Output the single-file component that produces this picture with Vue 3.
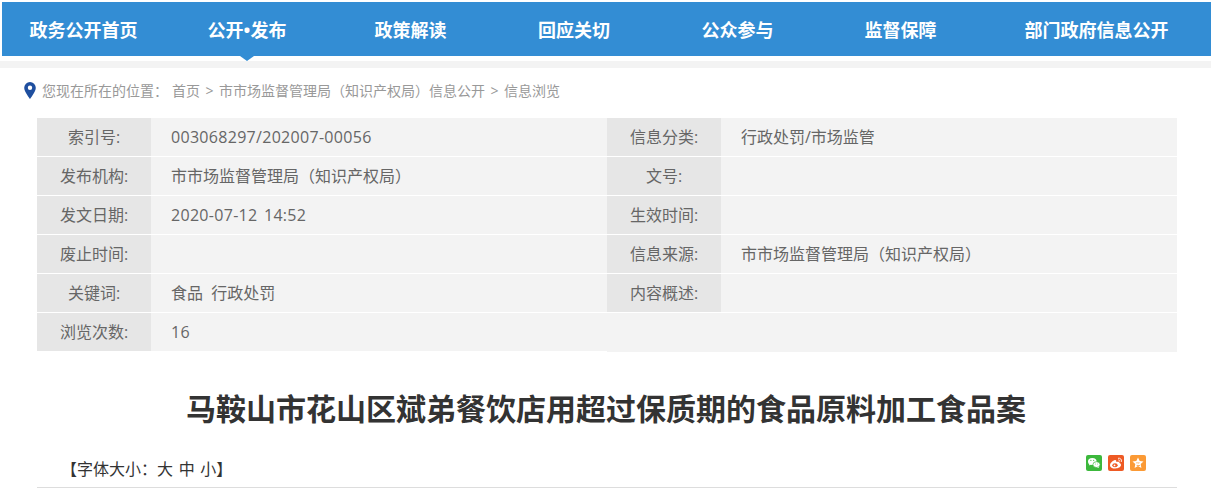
<script setup>
const navItems = ['政务公开首页', '公开•发布', '政策解读', '回应关切', '公众参与', '监督保障', '部门政府信息公开']
const rows = [
  ['索引号:', '003068297/202007-00056', '信息分类:', '行政处罚/市场监管'],
  ['发布机构:', '市市场监督管理局（知识产权局）', '文号:', ''],
  ['发文日期:', '2020-07-12 14:52', '生效时间:', ''],
  ['废止时间:', '', '信息来源:', '市市场监督管理局（知识产权局）'],
  ['关键词:', '食品  行政处罚', '内容概述:', ''],
]
const isNumeric = (text) => /^[\d/ :-]+$/.test(text)
</script>

<template>
  <div class="page">
    <nav class="nav">
      <a v-for="(item, i) in navItems" :key="item" class="nav-item" :class="{ active: i === 1 }">{{ item }}</a>
    </nav>
    <div class="band"></div>
    <div class="crumb">
      <svg class="pin" width="12" height="17" viewBox="0 0 12 17">
        <path fill="#1f4f9f" fill-rule="evenodd" d="M6 0a5.8 5.8 0 0 0-5.8 5.800C.2 9.800 6 17 6 17s5.800-7.200 5.800-11.200A5.800 5.800 0 0 0 6 0zm0 3.600a2.200 2.200 0 1 1 0 4.400 2.200 2.200 0 0 1 0-4.400z"/>
      </svg>
      <span class="crumb-lead">您现在所在的位置：</span>
      <span>首页</span><span class="sep">&gt;</span><span>市市场监督管理局（知识产权局）信息公开</span><span class="sep">&gt;</span><span>信息浏览</span>
    </div>
    <div class="meta">
      <div v-for="row in rows" :key="row[0]" class="row">
        <div class="label">{{ row[0] }}</div>
        <div class="value left" :class="{ num: isNumeric(row[1]) }">{{ row[1] }}</div>
        <div class="label right-label">{{ row[2] }}</div>
        <div class="value right">{{ row[3] }}</div>
      </div>
      <div class="row last">
        <div class="label">浏览次数:</div>
        <div class="value left num">16</div>
        <div class="value filler"></div>
      </div>
    </div>
    <h1 class="title">马鞍山市花山区斌弟餐饮店用超过保质期的食品原料加工食品案</h1>
    <div class="tools">
      <div class="fonts">【字体大小：大 中 小】</div>
      <div class="share">
        <svg width="16" height="16" viewBox="0 0 16 16">
          <rect width="16" height="16" rx="2" fill="#3cb83c"/>
          <ellipse cx="6.300" cy="6.500" rx="4.300" ry="3.500" fill="#fff"/>
          <path d="M3.500 8.800l-.6 1.800 2.200-1.100z" fill="#fff"/>
          <ellipse cx="10.500" cy="9.600" rx="3.600" ry="2.900" fill="#fff" stroke="#3cb83c" stroke-width=".7"/>
          <path d="M12.400 11.600l.6 1.500-2-.9z" fill="#fff"/>
          <circle cx="4.900" cy="5.300" r=".6" fill="#3cb83c"/>
          <circle cx="7.700" cy="5.300" r=".6" fill="#3cb83c"/>
          <circle cx="9.300" cy="9" r=".45" fill="#3cb83c"/>
          <circle cx="11.700" cy="9" r=".45" fill="#3cb83c"/>
        </svg>
        <svg width="16" height="16" viewBox="0 0 16 16">
          <rect width="16" height="16" rx="2" fill="#ee5a24"/>
          <path d="M2 10.400c0-2.200 3-5 5-5.300 1.300-.2 1.500 1 1.200 2 1.500-.6 3.300-.6 3.300 1 .8.300 1.500.9 1.500 2 0 1.900-2.700 3.400-5.700 3.400S2 12.300 2 10.400z" fill="#fff"/>
          <ellipse cx="7" cy="10.300" rx="2.700" ry="2" fill="#ee5a24"/>
          <circle cx="6.500" cy="10.400" r=".9" fill="#fff"/>
          <path d="M10 3.300c2.300-.5 3.900 1 3.500 3.500M10.200 5c1.100-.2 1.800.4 1.600 1.600" fill="none" stroke="#fff" stroke-width=".9"/>
        </svg>
        <svg width="16" height="16" viewBox="0 0 16 16">
          <rect width="16" height="16" rx="2" fill="#fb9a35"/>
          <path fill="#fff" d="M8 2.500l1.700 3.500 3.800.5-2.800 2.600.7 3.800L8 11.100 4.600 12.900l.7-3.800-2.800-2.600 3.800-.5z"/>
          <path fill="#fcb264" d="M6 7.400h4l-2.800 2.700 3-.1-.2 1H6.200l2.600-2.700H6z"/>
        </svg>
      </div>
    </div>
  </div>
</template>

<style scoped>
.page {
  width: 1211px;
  height: 499px;
  overflow: hidden;
  background: #fff;
  font-family: "Open Sans", "Noto Sans CJK SC", sans-serif;
  color: #666;
}
.nav {
  display: flex;
  height: 54px;
  margin: 2px 0 0 2px;
  background: #338dd4;
  position: relative;
}
.nav-item {
  position: relative;
  flex: none;
  height: 54px;
  line-height: 56px;
  color: #fff;
  font-size: 18px;
  font-weight: 700;
  text-align: center;
}
.nav-item:nth-child(1) { width: 163px; }
.nav-item:nth-child(2) { width: 164px; }
.nav-item:nth-child(3) { width: 163px; }
.nav-item:nth-child(4) { width: 164px; }
.nav-item:nth-child(5) { width: 163px; }
.nav-item:nth-child(6) { width: 163px; }
.nav-item:nth-child(7) { width: 229px; }
.nav-item.active::after {
  content: "";
  position: absolute;
  left: 50%;
  bottom: -5px;
  margin-left: -7px;
  border-left: 7px solid transparent;
  border-right: 7px solid transparent;
  border-top: 5px solid #338dd4;
}
.band {
  height: 7px;
  margin-top: 5px;
  background: #f3f3f3;
}
.crumb {
  display: flex;
  align-items: center;
  height: 30px;
  margin-top: 7px;
  padding-left: 24px;
  font-size: 14px;
  color: #999;
}
.pin { margin-right: 6px; flex: none; }
.crumb-lead { width: 130px; }
.sep { margin: 0 5.500px; }
.meta {
  margin: 13px 34px 0 37px;
}
.row {
  display: flex;
  height: 38px;
  margin-bottom: 1px;
  font-size: 16px;
  line-height: 38px;
}
.label {
  flex: none;
  width: 114px;
  background: #e6e6e6;
  text-align: center;
}
.value {
  flex: none;
  background: #f3f3f3;
  padding-left: 20px;
  white-space: pre;
  box-sizing: border-box;
}
.value.num { letter-spacing: .3px; word-spacing: 2px; }
.value.left { width: 456px; }
.right-label { width: 114px; }
.value.right { width: 456px; }
.value.filler { width: 570px; height: 39px; }
.title {
  margin: 37px 0 0;
  padding-left: 1px;
  text-align: center;
  font-size: 30px;
  line-height: 42px;
  font-weight: 700;
  color: #333;
}
.tools {
  display: flex;
  justify-content: space-between;
  margin: 14px 34px 0 37px;
  box-sizing: border-box;
  height: 44px;
  border-bottom: 1px solid #ddd;
}
.fonts {
  padding: 14px 0 0 24px;
  font-size: 16px;
  line-height: 22px;
  word-spacing: 1.500px;
  color: #333;
}
.share {
  display: flex;
  gap: 6px;
  padding: 11px 31px 0 0;
  align-items: flex-start;
}
</style>

<style>
html, body { margin: 0; background: #fff; }
</style>
